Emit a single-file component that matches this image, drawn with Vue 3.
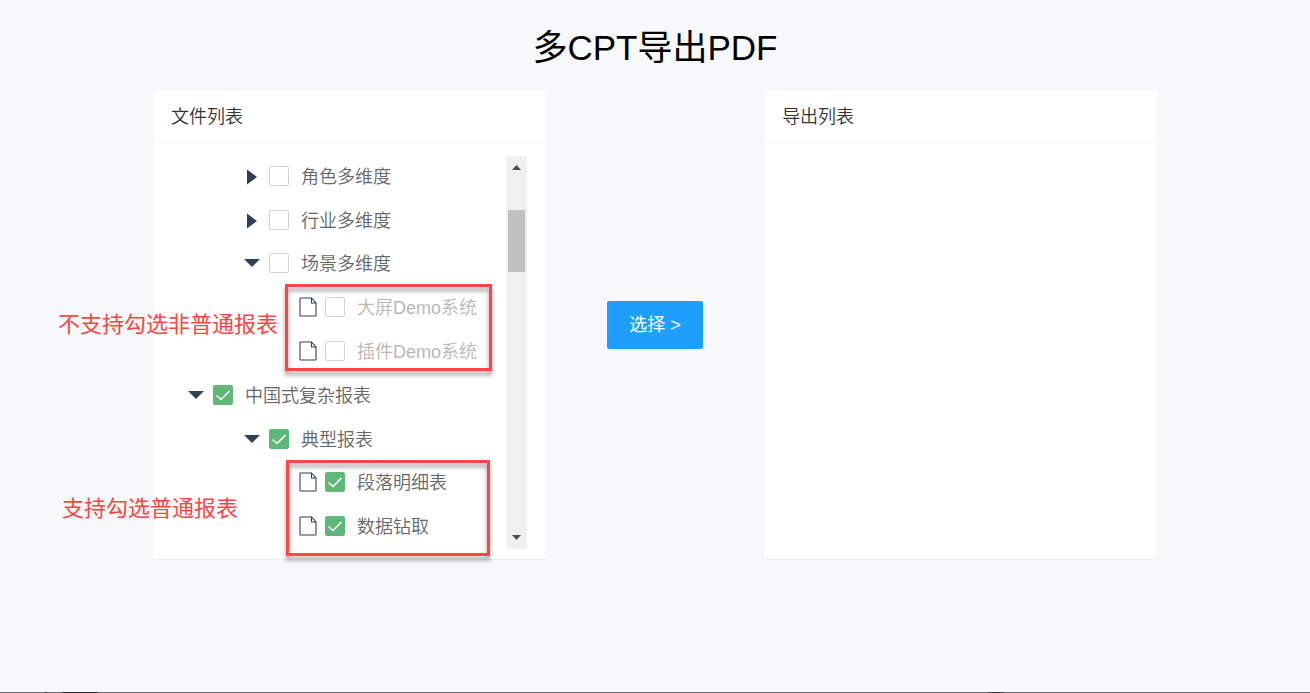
<script setup>
import { ref } from 'vue'

const nodes = ref([
  { id: 'role', label: '角色多维度', level: 1, kind: 'closed', checked: false },
  { id: 'industry', label: '行业多维度', level: 1, kind: 'closed', checked: false },
  { id: 'scene', label: '场景多维度', level: 1, kind: 'open', checked: false },
  { id: 'screen', label: '大屏Demo系统', level: 2, kind: 'file', checked: false, disabled: true },
  { id: 'plugin', label: '插件Demo系统', level: 2, kind: 'file', checked: false, disabled: true },
  { id: 'complex', label: '中国式复杂报表', level: 0, kind: 'open', checked: true },
  { id: 'typical', label: '典型报表', level: 1, kind: 'open', checked: true },
  { id: 'paragraph', label: '段落明细表', level: 2, kind: 'file', checked: true },
  { id: 'drill', label: '数据钻取', level: 2, kind: 'file', checked: true },
])
</script>

<template>
  <main class="page">
    <h1>多CPT导出PDF</h1>

    <div class="transfer">
      <section class="panel">
        <h2>文件列表</h2>
        <div class="body">
          <ul class="tree">
            <li v-for="node in nodes" :key="node.id" class="row" :class="'level-' + node.level">
              <span class="marker">
                <svg v-if="node.kind === 'closed'" class="closed" width="10" height="16" viewBox="0 0 10 16">
                  <path d="M0 0.5 10 8 0 15.5Z" />
                </svg>
                <svg v-else-if="node.kind === 'open'" width="16" height="8" viewBox="0 0 16 8">
                  <path d="M0 0H16L8 8Z" />
                </svg>
                <svg v-else class="file" width="18" height="20" viewBox="0 0 18 20">
                  <path d="M12.500 1H1.700Q1 1 1 1.700V18.300Q1 19 1.700 19H16.300Q17 19 17 18.300V6ZV6H17" />
                </svg>
              </span>
              <span class="tick">
                <input :id="node.id" v-model="node.checked" type="checkbox" :disabled="node.disabled" />
                <svg v-if="node.checked" width="20" height="20" viewBox="0 0 20 20">
                  <path d="M3.500 10.500 8 14.500 16.500 6" />
                </svg>
              </span>
              <label :for="node.id" :class="{ disabled: node.disabled }">{{ node.label }}</label>
            </li>
          </ul>
          <div class="scrollbar" aria-hidden="true">
            <svg width="9" height="5" viewBox="0 0 9 5"><path d="M0 5 4.500 0 9 5Z" /></svg>
            <div class="track"><div class="thumb"></div></div>
            <svg width="9" height="5" viewBox="0 0 9 5"><path d="M0 0H9L4.500 5Z" /></svg>
          </div>
        </div>
        <div class="frame frame-unsupported"></div>
        <p class="note note-unsupported">不支持勾选非普通报表</p>
        <div class="frame frame-supported"></div>
        <p class="note note-supported">支持勾选普通报表</p>
      </section>

      <div class="actions">
        <button type="button">选择 &gt;</button>
      </div>

      <section class="panel">
        <h2>导出列表</h2>
      </section>
    </div>

    <div class="edge"></div>
  </main>
</template>

<style>
body {
  background: #f7f8fa;
}
</style>

<style scoped>
.page {
  box-sizing: border-box;
  min-height: 100vh;
  display: flex;
  flex-direction: column;
  padding-top: 22px;
  background: #f7f8fa;
  color: #333;
  font-family: "Liberation Sans", "Noto Sans CJK SC", sans-serif;
  font-size: 18px;
  font-weight: 350;
}
h1 {
  margin: 0 0 18px;
  color: #000;
  font-size: 35px;
  font-weight: 400;
  line-height: 51px;
  text-align: center;
}
.transfer {
  display: grid;
  grid-template-columns: 9fr 5fr 9fr;
  padding: 0 153px;
}
.panel {
  position: relative;
  border-radius: 2px;
  background: #fff;
  box-shadow: 0 1px 2px rgba(0, 0, 0, 0.06);
}
h2 {
  margin: 0;
  padding: 0 18px;
  border-bottom: 1px solid #f3f5f6;
  font-size: 18px;
  font-weight: 350;
  line-height: 52px;
}
.body {
  display: flex;
  padding: 10px 19px 10px 34px;
}
.tree {
  flex: 1;
  display: grid;
  grid-auto-rows: 1fr;
  height: 394px;
  margin: 0;
  padding: 0;
  list-style: none;
}
.row {
  display: flex;
  align-items: center;
}
.level-1 {
  padding-left: 56px;
}
.level-2 {
  padding-left: 112px;
}
.marker {
  display: flex;
  justify-content: center;
  width: 18px;
  margin-right: 8px;
  fill: #2f4056;
}
.closed {
  margin-top: 2px;
}
.file {
  fill: none;
  stroke: #2f4056;
  stroke-width: 1.1;
}
.tick {
  display: grid;
  margin-right: 12px;
}
.tick > * {
  grid-area: 1 / 1;
}
.tick input {
  appearance: none;
  box-sizing: border-box;
  width: 20px;
  height: 20px;
  margin: 0;
  border: 1px solid #d2d2d2;
  border-radius: 2px;
  background: #fff;
}
.tick input:checked {
  border-color: #5fb878;
  background: #5fb878;
}
.tick svg {
  fill: none;
  stroke: #fff;
  stroke-width: 1.6;
  pointer-events: none;
}
label {
  padding-top: 2px;
  color: #666;
  line-height: 26px;
  white-space: nowrap;
}
label.disabled {
  color: #b8b8b8;
}
.scrollbar {
  box-sizing: border-box;
  display: flex;
  flex-direction: column;
  align-items: center;
  width: 21px;
  height: 393px;
  margin-top: 2px;
  padding: 9px 0;
  background: #f0f0f0;
  fill: #4d4d4d;
}
.track {
  flex: 1;
  padding-top: 40px;
}
.thumb {
  width: 17px;
  height: 62px;
  background: #c1c1c1;
}
.frame {
  position: absolute;
  box-sizing: border-box;
  border: 3px solid #ff4444;
  filter: drop-shadow(0 4px 2px rgba(0, 0, 0, 0.4));
  pointer-events: none;
}
.frame-unsupported {
  left: 132px;
  top: 193px;
  width: 207px;
  height: 87px;
}
.frame-supported {
  left: 133px;
  top: 369px;
  width: 204px;
  height: 96px;
}
.note {
  position: absolute;
  margin: 0;
  color: #ff4444;
  font-size: 22px;
  font-weight: 400;
  line-height: 30px;
  white-space: nowrap;
}
.note-unsupported {
  left: -95px;
  top: 219px;
}
.note-supported {
  left: -91px;
  top: 403px;
}
.actions {
  display: flex;
  align-items: center;
  justify-content: center;
}
button {
  height: 48px;
  padding: 0 22px 4px;
  border: 0;
  border-radius: 2px;
  background: #1e9fff;
  color: #fff;
  font: inherit;
  font-weight: 400;
  white-space: nowrap;
}
.edge {
  height: 1px;
  margin-top: auto;
  background:
    linear-gradient(#2a2430, #2a2430) 62px 0 / 36px 1px no-repeat,
    linear-gradient(#2a2430, #2a2430) 45px 0 / 2px 1px no-repeat,
    linear-gradient(#3a3340, #3a3340) 988px 0 / 16px 1px no-repeat,
    #706c70;
}
</style>
